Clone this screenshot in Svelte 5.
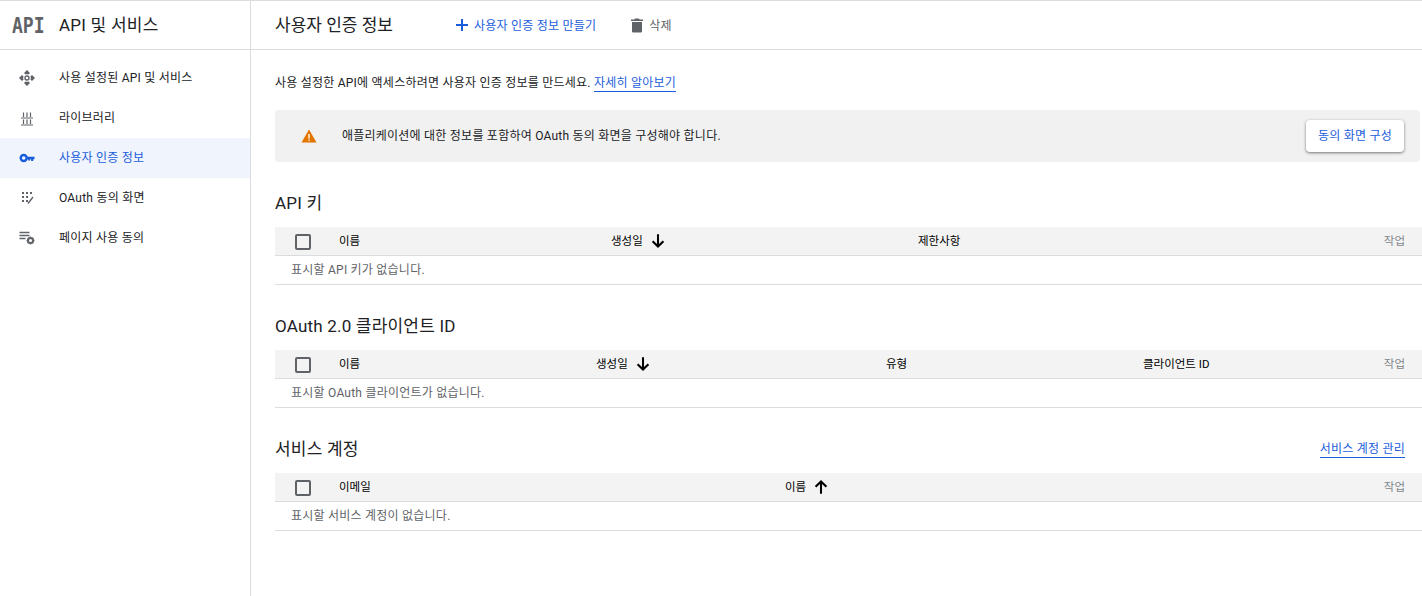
<script lang="ts">
  const nav = [
    { label: '사용 설정된 API 및 서비스', icon: 'api' },
    { label: '라이브러리', icon: 'lib' },
    { label: '사용자 인증 정보', icon: 'key', active: true },
    { label: 'OAuth 동의 화면', icon: 'consent' },
    { label: '페이지 사용 동의', icon: 'terms' }
  ];

  const sections = [
    {
      title: 'API 키',
      cls: 'cols-key',
      cols: [{ t: '이름' }, { t: '생성일', sort: 'down' }, { t: '제한사항' }],
      empty: '표시할 API 키가 없습니다.'
    },
    {
      title: 'OAuth 2.0 클라이언트 ID',
      cls: 'cols-oauth',
      cols: [{ t: '이름' }, { t: '생성일', sort: 'down' }, { t: '유형' }, { t: '클라이언트 ID' }],
      empty: '표시할 OAuth 클라이언트가 없습니다.'
    },
    {
      title: '서비스 계정',
      cls: 'cols-service',
      link: '서비스 계정 관리',
      cols: [{ t: '이메일' }, { t: '이름', sort: 'up' }],
      empty: '표시할 서비스 계정이 없습니다.'
    }
  ];
</script>

<div class="page">
  <aside class="sidebar">
    <div class="brand">
      <span class="logo-box"><span class="logo">API</span></span>
      <span class="brand-name">API 및 서비스</span>
    </div>
    <nav>
      {#each nav as item}
        <div class="nav-item" class:active={item.active}>
          <svg class="nav-icon" viewBox="0 0 16 16" width="16" height="16">
            {#if item.icon === 'api'}
              <path d="M8 0 11 3 9.500 4.600C8.500 4 7.500 4 6.500 4.600L5 3ZM8 16 11 13 9.500 11.400C8.500 12 7.500 12 6.500 11.400L5 13ZM0 8 3 5 4.600 6.500C4 7.500 4 8.500 4.600 9.500L3 11ZM16 8 13 5 11.400 6.500C12 7.500 12 8.500 11.400 9.500L13 11Z" fill="#5f6368" />
              <circle cx="8" cy="8" r="2" fill="none" stroke="#5f6368" stroke-width="1.400" />
            {:else if item.icon === 'lib'}
              <path d="M2 8h12M2 15h12M4.500 2.500v4.500M8 2.500v4.500M11.500 2.500v4.500M4.500 9.500v4.500M8 9.500v4.500M11.500 9.500v4.500" stroke="#5f6368" stroke-width="1.200" fill="none" />
            {:else if item.icon === 'key'}
              <circle cx="4.700" cy="8" r="3" fill="none" stroke="#1a5ddb" stroke-width="2.400" />
              <path d="M7.500 6.700h8v2.600h-1.300v1.700h-2V9.300h-1v1.200H9.200V9.300H7.500Z" fill="#1a5ddb" />
            {:else if item.icon === 'consent'}
              <path d="M3 2h2v2H3ZM7 2h2v2H7ZM11 2h2v2h-2ZM3 6h2v2H3ZM7 6h2v2H7ZM3 10h2v2H3ZM7 10h2v2H7Z" fill="#5f6368" />
              <path d="M9 13.500 14 7" stroke="#5f6368" stroke-width="1.400" fill="none" />
            {:else}
              <path d="M0.500 2.500h10M0.500 5.500h10M0.500 8.500h6" stroke="#5f6368" stroke-width="1.300" fill="none" />
              <circle cx="11.500" cy="10.500" r="2.500" fill="none" stroke="#5f6368" stroke-width="2" />
              <path d="M11.500 6.500v1.500M11.500 13v1.500M7.500 10.500H9M14 10.500h1.500M8.700 7.700l1 1M13.300 12.300l1 1M8.700 13.300l1-1M13.300 8.700l1-1" stroke="#5f6368" stroke-width="1.300" />
            {/if}
          </svg>
          <span class="nav-label">{item.label}</span>
        </div>
      {/each}
    </nav>
  </aside>

  <main class="content">
    <header class="topbar">
      <h1>사용자 인증 정보</h1>
      <button class="action create">
        <svg viewBox="0 0 14 14" width="14" height="14"><path d="M6 1h2v5h5v2H8v5H6V8H1V6h5Z" fill="#1a5ddb" /></svg>
        <span class="action-label">사용자 인증 정보 만들기</span>
      </button>
      <button class="action remove">
        <svg viewBox="0 0 14 16" width="14" height="16"><path d="M2 5h10v9.200c0 .9-.7 1.300-1.400 1.300H3.400C2.700 15.500 2 15.100 2 14.200ZM1 2.500h3.300L5.200 1.500h3.600l.9 1H13V4H1Z" fill="#5f6368" /></svg>
        <span class="action-label">삭제</span>
      </button>
    </header>

    <div class="body">
      <p class="intro">사용 설정한 API에 액세스하려면 사용자 인증 정보를 만드세요. <a href="#learn">자세히 알아보기</a></p>

      <div class="banner">
        <svg viewBox="0 0 16 14" width="16" height="14">
          <path d="M8 0.500 15.500 13.500H0.500Z" fill="#e37400" />
          <path d="M7.300 5h1.400v4.600H7.300ZM7.300 10.400h1.400v1.400H7.300Z" fill="#fff" />
        </svg>
        <span class="banner-text">애플리케이션에 대한 정보를 포함하여 OAuth 동의 화면을 구성해야 합니다.</span>
        <button class="raised">동의 화면 구성</button>
      </div>

      {#each sections as s}
        <section>
          <div class="section-head">
            <h2>{s.title}</h2>
            {#if s.link}<a href="#manage">{s.link}</a>{/if}
          </div>
          <div class="row head {s.cls}">
            <span class="check"></span>
            {#each s.cols as c}
              <span class="col">
                <span class="col-label">{c.t}</span>
                {#if c.sort}
                  <svg class="sort" class:up={c.sort === 'up'} viewBox="0 0 14 14" width="16" height="16">
                    <path d="M6.100 1h1.800v8.700l3.200-3.200 1.300 1.300L7 13.200 1.600 7.800l1.300-1.300 3.200 3.200Z" fill="#000" />
                  </svg>
                {/if}
              </span>
            {/each}
            <span class="col-action">작업</span>
          </div>
          <div class="empty">{s.empty}</div>
        </section>
      {/each}
    </div>
  </main>
</div>

<style>
  :global(body) {
    margin: 0;
    background: #fff;
  }

  .page {
    display: flex;
    height: 596px;
    border-top: 1px solid #dadce0;
    box-sizing: border-box;
    overflow: hidden;
    font-family: Roboto, 'Noto Sans CJK KR', sans-serif;
    color: #202124;
    font-size: 12px;
    letter-spacing: 0.23px;
  }

  .sidebar {
    width: 251px;
    flex: none;
    box-sizing: border-box;
    border-right: 1px solid #dadce0;
  }

  .brand {
    height: 49px;
    box-sizing: border-box;
    border-bottom: 1px solid #dadce0;
    display: flex;
    align-items: center;
    padding-left: 12px;
  }

  .logo-box {
    width: 47px;
    flex: none;
  }

  .logo {
    display: inline-block;
    font-family: 'DejaVu Sans Mono', monospace;
    font-weight: 700;
    font-size: 22px;
    letter-spacing: 0;
    color: #5f6368;
    transform: scaleX(0.82);
    transform-origin: left center;
  }

  .brand-name {
    font-size: 17px;
    padding-bottom: 3px;
  }

  nav {
    padding-top: 8px;
  }

  .nav-item {
    height: 40px;
    display: flex;
    align-items: center;
    padding-left: 19px;
    gap: 24px;
  }

  .nav-label {
    padding-bottom: 3px;
  }

  .nav-item.active {
    background: #f0f4fd;
    color: #1a5ddb;
  }

  .nav-icon {
    flex: none;
  }

  .content {
    flex: 1;
    min-width: 0;
  }

  .topbar {
    height: 49px;
    box-sizing: border-box;
    border-bottom: 1px solid #dadce0;
    display: flex;
    align-items: center;
    padding-left: 24px;
  }

  h1 {
    margin: 0 62px 0 0;
    padding-bottom: 3px;
    font-size: 17px;
    font-weight: 400;
    letter-spacing: 0;
  }

  .action {
    display: flex;
    align-items: center;
    border: 0;
    background: none;
    padding: 0;
    font: inherit;
    letter-spacing: inherit;
    gap: 5px;
  }

  .action-label {
    padding-bottom: 2px;
  }

  .create {
    color: #1a5ddb;
    margin-right: 34px;
  }

  .remove {
    color: #5f6368;
  }

  .body {
    padding: 0 0 0 24px;
  }

  .intro {
    margin: 0;
    padding-top: 24px;
    height: 60px;
    box-sizing: border-box;
    line-height: 18px;
  }

  a {
    color: #1a5ddb;
    text-decoration: none;
    border-bottom: 1px solid #1a5ddb;
    padding-bottom: 1px;
  }

  .banner {
    height: 52px;
    margin-right: 2px;
    background: #f1f1f1;
    border-radius: 4px;
    display: flex;
    align-items: center;
    padding: 0 16px 0 26px;
    gap: 25px;
  }

  .banner-text {
    flex: 1;
    padding-bottom: 3px;
  }

  .raised {
    height: 32px;
    width: 98px;
    padding: 0 0 4px;
    border: 0;
    border-radius: 4px;
    background: #fff;
    color: #1a5ddb;
    font: inherit;
    letter-spacing: inherit;
    box-shadow: 0 1px 3px rgba(60, 64, 67, 0.7);
  }

  section {
    height: 123px;
  }

  section:first-of-type {
    margin-top: 23px;
  }

  .section-head {
    height: 42px;
    display: flex;
    justify-content: space-between;
    align-items: flex-start;
    padding-right: 17px;
  }

  h2 {
    margin: 0;
    font-size: 17px;
    font-weight: 400;
    line-height: 36px;
    letter-spacing: 0.2px;
  }

  .section-head a {
    margin-top: 8px;
  }

  .row {
    display: grid;
    align-items: center;
  }

  .head {
    height: 29px;
    box-sizing: border-box;
    background: #f3f3f3;
    border-bottom: 1px solid #dadce0;
    padding-right: 17px;
  }

  .cols-key {
    grid-template-columns: 64px 272px 307px 1fr auto;
  }

  .cols-oauth {
    grid-template-columns: 64px 257px 290px 257px 1fr auto;
  }

  .cols-service {
    grid-template-columns: 64px 446px 1fr auto;
  }

  .check {
    box-sizing: border-box;
    width: 16px;
    height: 16px;
    margin: 2px 0 0 20px;
    border: 2px solid #5f6368;
    border-radius: 2px;
  }

  .col {
    display: flex;
    align-items: center;
    gap: 7px;
    font-size: 11.500px;
    letter-spacing: 0;
    color: #000;
  }

  .col-label {
    padding-bottom: 2px;
  }

  .up {
    transform: rotate(180deg);
  }

  .col-action {
    font-size: 11.500px;
    letter-spacing: 0;
    color: #80868b;
    padding-bottom: 2px;
  }

  .empty {
    height: 29px;
    box-sizing: border-box;
    border-bottom: 1px solid #dadce0;
    padding-left: 16px;
    line-height: 28px;
    color: #5f6368;
  }
</style>
